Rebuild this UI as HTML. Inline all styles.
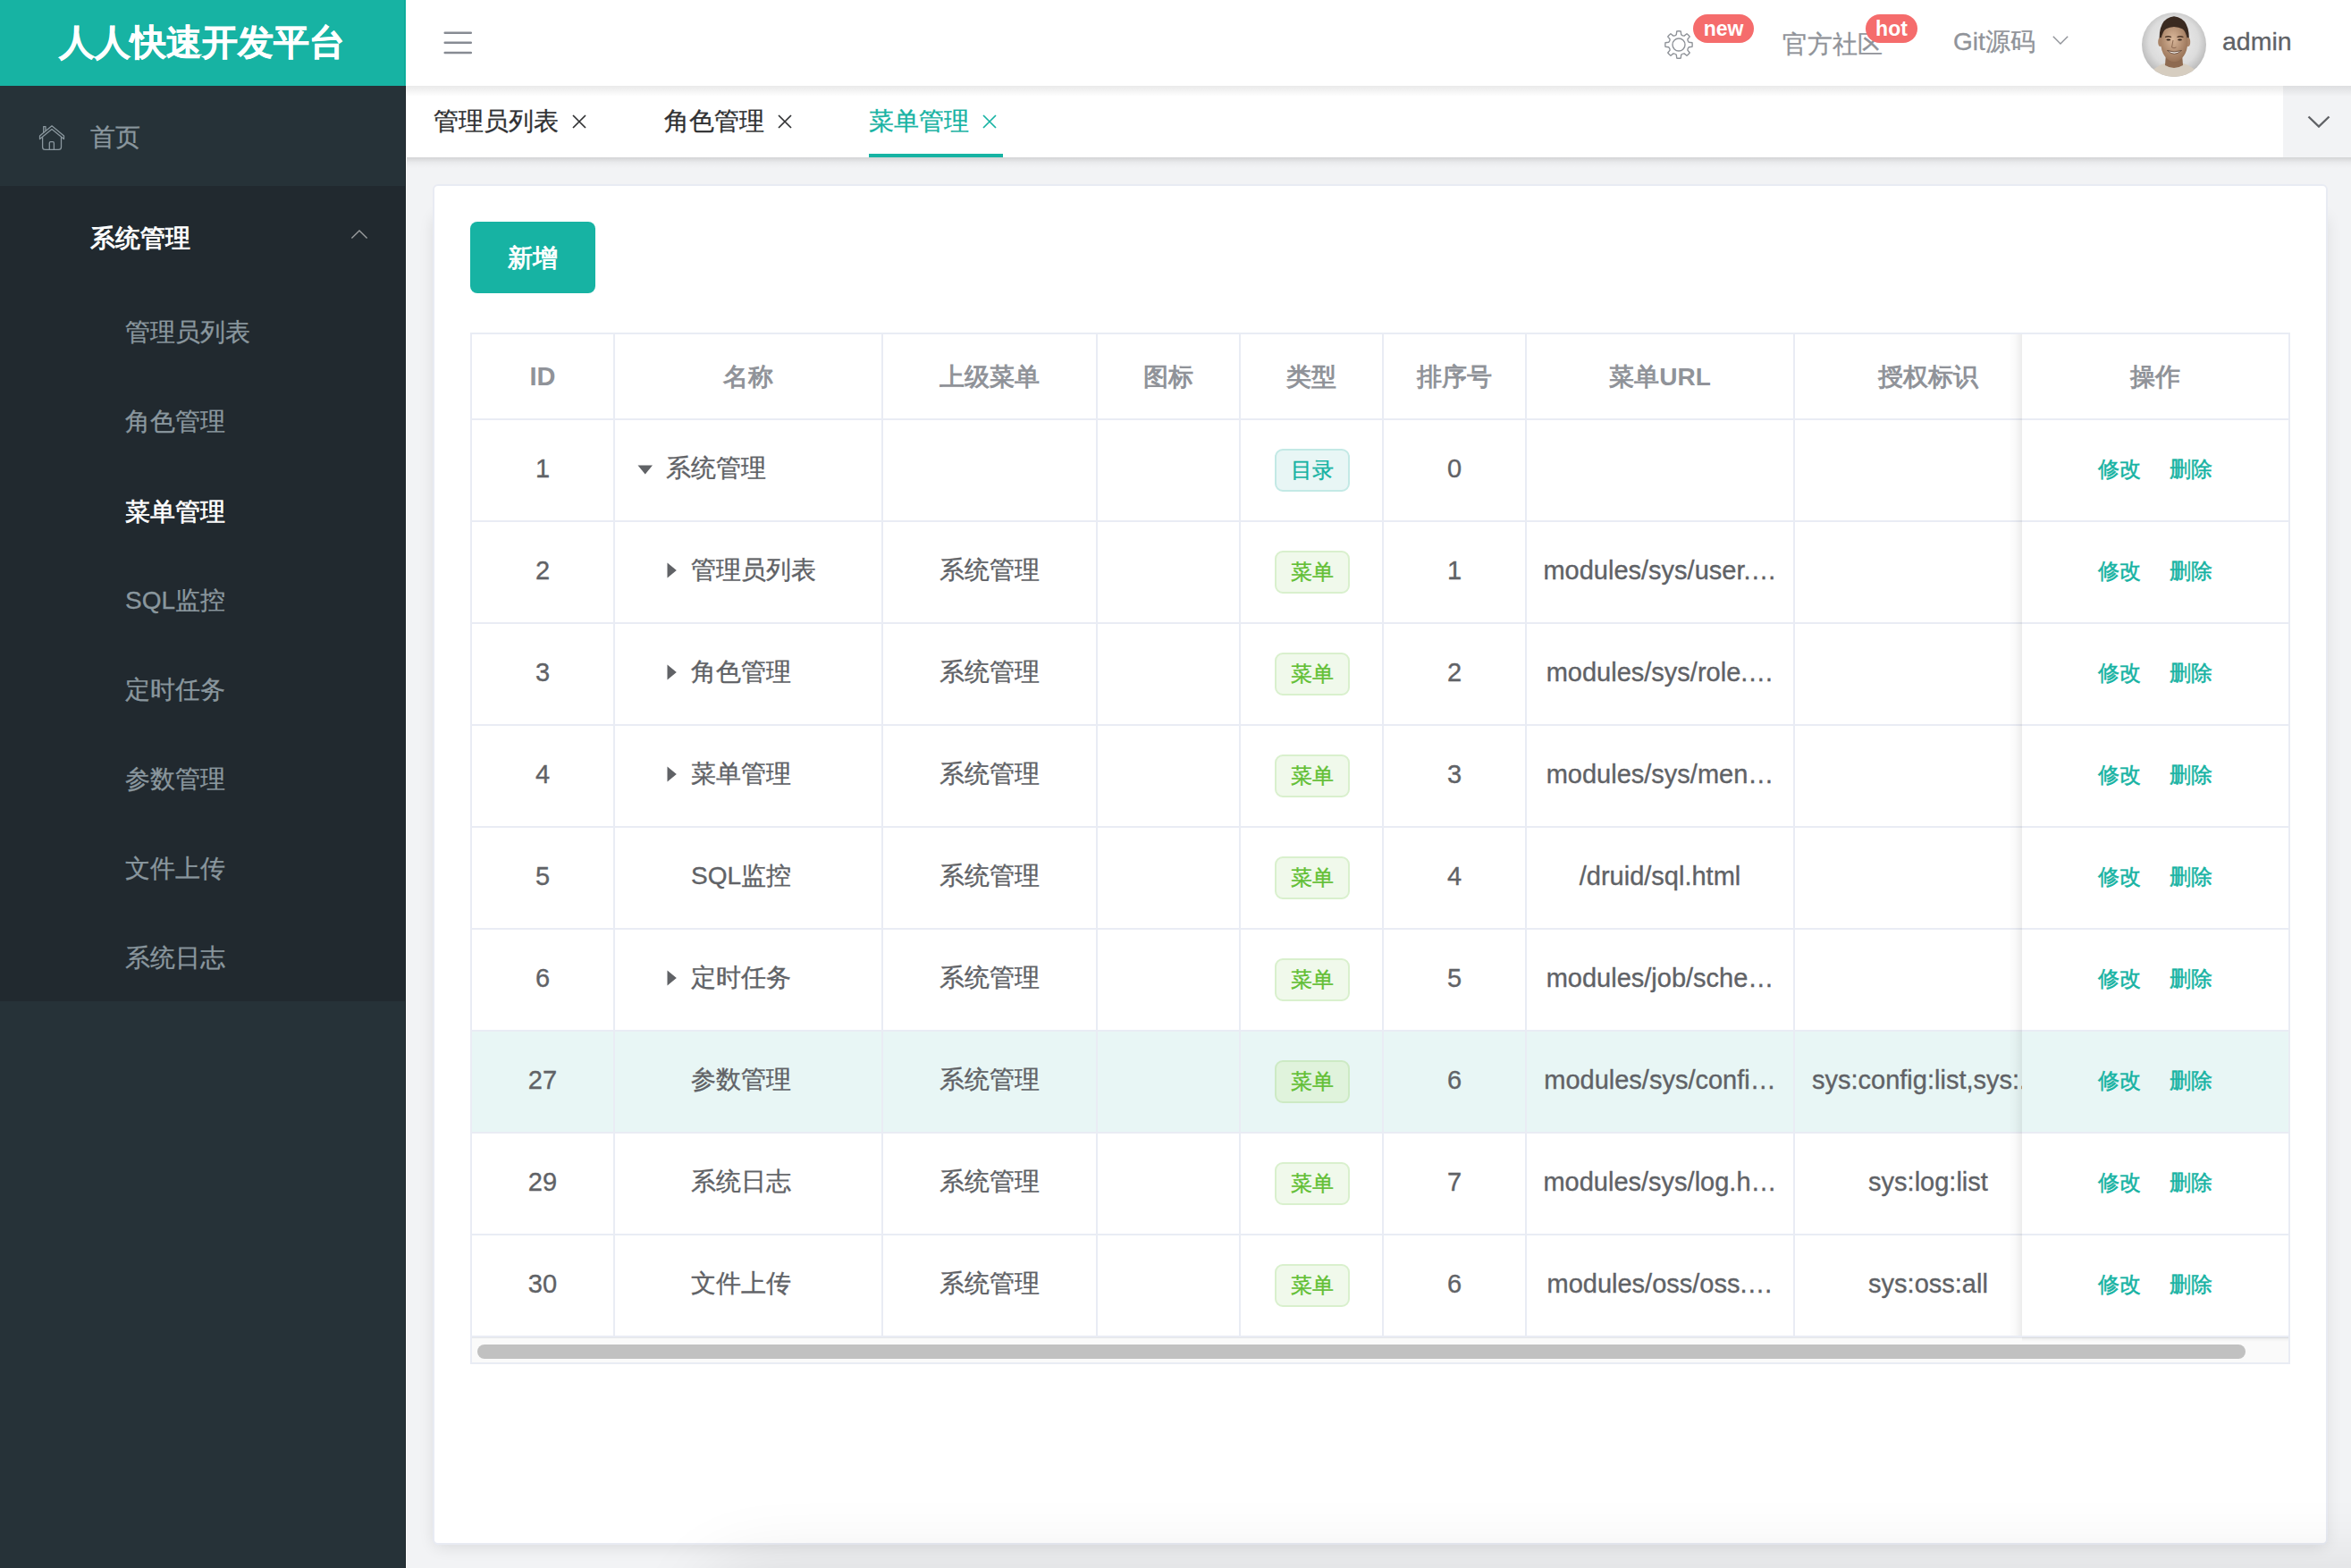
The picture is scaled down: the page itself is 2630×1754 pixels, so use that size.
<!DOCTYPE html>
<html><head><meta charset="utf-8">
<style>
*{box-sizing:border-box;margin:0;padding:0}
html,body{width:2630px;height:1754px;overflow:hidden;background:#f2f3f5;font-family:"Liberation Sans",sans-serif;}
.abs{position:absolute;white-space:nowrap}
.t{position:absolute;white-space:nowrap;line-height:1}
/* sidebar */
#sb{position:absolute;left:0;top:0;width:454px;height:1754px;background:#263238}
#logo{position:absolute;left:0;top:0;width:454px;height:96px;background:#17b3a3}
#sub{position:absolute;left:0;top:208px;width:454px;height:912px;background:#21292f}
.sbi{color:#8a979e;font-size:28px;-webkit-text-stroke:0.3px currentColor}
/* navbar */
#nav{position:absolute;left:454px;top:0;width:2176px;height:96px;background:#fff;z-index:3}
.gray{color:#909399;font-size:28px;-webkit-text-stroke:0.3px currentColor}
.badge{position:absolute;height:32px;border-radius:16px;background:#f56c6c;color:#fff;font-weight:bold;font-size:23px;text-align:center;line-height:32px}
/* tabs */
#tabs{position:absolute;left:454px;top:96px;width:2176px;height:80px;background:#fff;z-index:2}
.tab{font-size:28px;color:#303133;-webkit-text-stroke:0.3px currentColor}
/* card */
#card{position:absolute;left:484px;top:206px;width:2120px;height:1522px;background:#fff;border:2px solid #e8ebf3;border-radius:6px}
#btn{position:absolute;left:526px;top:248px;width:140px;height:80px;background:#17b3a3;border-radius:8px}
.hl{position:absolute;background:#e9ecf4}
.cell{position:absolute;font-size:28px;color:#606266;white-space:nowrap;line-height:1;-webkit-text-stroke:0.35px currentColor}
.hd{font-weight:bold;color:#909399;-webkit-text-stroke:0}
.lat{font-size:29px}
.tag{position:absolute;width:84px;height:48px;border-radius:9px;font-size:24px;line-height:43px;text-align:center;-webkit-text-stroke:0.35px currentColor}
.tg{background:#f0f9eb;border:2px solid #d9f0cd;color:#62bf35}
.tt{background:#e8f6f5;border:2px solid #c3e9e5;color:#17b3a3}
.op{position:absolute;font-size:24px;color:#17b3a3;line-height:1;-webkit-text-stroke:0.5px currentColor}
</style></head>
<body>
<div id="sb">
  <div id="logo"><span class="t" style="left:66px;top:27px;font-size:40px;font-weight:bold;color:#fff;-webkit-text-stroke:0.4px #fff">人人快速开发平台</span></div>
  <svg class="abs" style="left:38px;top:134px" width="40" height="40" viewBox="0 0 40 40" fill="none" stroke="#8a979e" stroke-width="1.3" stroke-linejoin="round">
    <path d="M6.5 21.5 V18 L20 6.8 L33.5 18 V21.5 L20 10.6 Z"/>
    <path d="M9.6 19.2 V30.4 Q9.6 33.3 12.5 33.3 H27.5 Q30.5 33.3 30.5 30.4 V19.2"/>
    <path d="M17.3 33.3 V25.9 Q17.3 24.6 18.6 24.6 H21.1 Q22.4 24.6 22.4 25.9 V33.3"/>
    <path d="M10.7 14.4 V7.6 H13 V12.5"/>
  </svg>
  <span class="t sbi" style="left:101px;top:140px">首页</span>
  <div id="sub">
    <span class="t" style="left:101px;top:45px;font-size:28px;color:#fff;-webkit-text-stroke:0.9px #fff">系统管理</span>
    <svg class="abs" style="left:392px;top:40px" width="20" height="22" viewBox="0 0 20 22" fill="none" stroke="#9a9d9f" stroke-width="1.4"><path d="M1.4 18.4 L10 10 L18.6 18.4"/></svg>
    <span class="t sbi" style="left:140px;top:150px">管理员列表</span>
    <span class="t sbi" style="left:140px;top:250px">角色管理</span>
    <span class="t sbi" style="left:140px;top:351px;color:#fff;-webkit-text-stroke:0.6px #fff">菜单管理</span>
    <span class="t sbi" style="left:140px;top:450px">SQL监控</span>
    <span class="t sbi" style="left:140px;top:550px">定时任务</span>
    <span class="t sbi" style="left:140px;top:650px">参数管理</span>
    <span class="t sbi" style="left:140px;top:750px">文件上传</span>
    <span class="t sbi" style="left:140px;top:850px">系统日志</span>
  </div>
</div>

<div id="nav">
  <svg class="abs" style="left:40px;top:30px" width="36" height="36" viewBox="0 0 36 36" stroke="#878b93" stroke-width="2.5" stroke-linecap="round"><path d="M3.7 6.8 H32.8 M3.7 17.8 H32.8 M3.7 28.9 H32.8"/></svg>
</div>
<!-- navbar right (absolute page coords) -->
<div style="position:absolute;left:0;top:0;z-index:4">
  <svg class="abs" style="left:1858px;top:30px" width="40" height="40" viewBox="0 0 40 40" fill="none" stroke="#8f9399" stroke-width="1.4" stroke-linejoin="round">
    <path d="M17.29 8.72 L17.75 4.97 A15.2 15.2 0 0 1 22.25 4.97 L22.71 8.72 A4.6 4.6 0 0 0 26.06 10.11 L29.04 7.78 A15.2 15.2 0 0 1 32.22 10.96 L29.89 13.94 A4.6 4.6 0 0 0 31.28 17.29 L35.03 17.75 A15.2 15.2 0 0 1 35.03 22.25 L31.28 22.71 A4.6 4.6 0 0 0 29.89 26.06 L32.22 29.04 A15.2 15.2 0 0 1 29.04 32.22 L26.06 29.89 A4.6 4.6 0 0 0 22.71 31.28 L22.25 35.03 A15.2 15.2 0 0 1 17.75 35.03 L17.29 31.28 A4.6 4.6 0 0 0 13.94 29.89 L10.96 32.22 A15.2 15.2 0 0 1 7.78 29.04 L10.11 26.06 A4.6 4.6 0 0 0 8.72 22.71 L4.97 22.25 A15.2 15.2 0 0 1 4.97 17.75 L8.72 17.29 A4.6 4.6 0 0 0 10.11 13.94 L7.78 10.96 A15.2 15.2 0 0 1 10.96 7.78 L13.94 10.11 A4.6 4.6 0 0 0 17.29 8.72Z"/>
    <circle cx="20" cy="20" r="7"/>
  </svg>
  <div class="badge" style="left:1894px;top:16px;width:68px">new</div>
  <span class="t gray" style="left:1994px;top:36px">官方社区</span>
  <div class="badge" style="left:2087px;top:16px;width:58px">hot</div>
  <span class="t gray" style="left:2185px;top:33px">Git源码</span>
  <svg class="abs" style="left:2296px;top:40px" width="18" height="10" viewBox="0 0 18 10" fill="none" stroke="#909399" stroke-width="1.4"><path d="M0.8 0.8 L9 9 L17.2 0.8"/></svg>
  <svg class="abs" style="left:2396px;top:14px" width="72" height="72" viewBox="0 0 72 72">
    <defs><radialGradient id="bgav" cx="50%" cy="45%" r="55%"><stop offset="0" stop-color="#f0f0f0"/><stop offset="0.7" stop-color="#dcdcdc"/><stop offset="1" stop-color="#b8b8b8"/></radialGradient>
    <radialGradient id="skin" cx="45%" cy="40%" r="60%"><stop offset="0" stop-color="#d9b79a"/><stop offset="1" stop-color="#9a7458"/></radialGradient>
    <clipPath id="cl"><circle cx="36" cy="36" r="36"/></clipPath></defs>
    <g clip-path="url(#cl)">
      <rect width="72" height="72" fill="url(#bgav)"/>
      <path d="M8 72 Q12 61 25 57 L47 57 Q60 61 64 72 Z" fill="#d6cdc0"/>
      <path d="M27 46 L45 46 L46 59 Q36 65 26 59 Z" fill="#8e6a50"/>
      <path d="M19.8 36 Q17.5 6 36 4.2 Q55 6 52.6 36 Z" fill="#3a2a20"/>
      <ellipse cx="20.8" cy="33" rx="2.6" ry="5" fill="#a98468"/>
      <ellipse cx="51.6" cy="33" rx="2.6" ry="5" fill="#a98468"/>
      <ellipse cx="36.2" cy="34" rx="15" ry="21" fill="url(#skin)"/>
      
      <path d="M21.5 24 Q23 12.5 36 11.8 Q49 12.5 51 24 Q47 16.5 36 16 Q25.5 16.5 21.5 24 Z" fill="#3a2a20"/>
      <path d="M26 27.5 Q29.5 26 33 27.5 M39.5 27.5 Q43 26 46.5 27.5" stroke="#4a3426" stroke-width="1.3" fill="none"/>
      <ellipse cx="29.8" cy="30.5" rx="2.4" ry="1.1" fill="#3a2a20"/>
      <ellipse cx="42.5" cy="30.5" rx="2.4" ry="1.1" fill="#3a2a20"/>
      <path d="M35 31 L33.5 39 Q36 40.5 38.5 39" stroke="#8c6a52" stroke-width="1" fill="none"/>
      <path d="M28.5 42.5 Q36 50 44.5 42.5 Q36 45.5 28.5 42.5 Z" fill="#f4efe8" stroke="#5a3e2e" stroke-width="0.8"/>
    </g>
  </svg>
  <span class="t" style="left:2486px;top:32px;font-size:28.5px;color:#606266;-webkit-text-stroke:0.3px #606266">admin</span>
</div>

<div id="tabs">
  <div class="abs" style="left:2100px;top:0;width:76px;height:80px;background:#f2f3f5"></div>
  <svg class="abs" style="left:2127px;top:33px" width="26" height="14" viewBox="0 0 26 14" fill="none" stroke="#606266" stroke-width="2.4"><path d="M1.5 1.5 L13 12.5 L24.5 1.5"/></svg>
  <span class="t tab" style="left:31px;top:26px">管理员列表</span>
  <svg class="abs" style="left:186px;top:32px" width="16" height="16" viewBox="0 0 16 16" stroke="#303133" stroke-width="1.7"><path d="M1 1 L15 15 M15 1 L1 15"/></svg>
  <span class="t tab" style="left:289px;top:26px">角色管理</span>
  <svg class="abs" style="left:416px;top:32px" width="16" height="16" viewBox="0 0 16 16" stroke="#303133" stroke-width="1.7"><path d="M1 1 L15 15 M15 1 L1 15"/></svg>
  <span class="t tab" style="left:518px;top:26px;color:#17b3a3">菜单管理</span>
  <svg class="abs" style="left:645px;top:32px" width="16" height="16" viewBox="0 0 16 16" stroke="#17b3a3" stroke-width="1.7"><path d="M1 1 L15 15 M15 1 L1 15"/></svg>
  <div class="abs" style="left:518px;top:76px;width:150px;height:4px;background:#17b3a3"></div>
</div>

<div class="abs" style="left:454px;top:96px;width:2176px;height:12px;background:linear-gradient(rgba(0,0,0,.085),rgba(0,0,0,0));z-index:3"></div>
<div class="abs" style="left:454px;top:176px;width:2176px;height:12px;background:linear-gradient(rgba(0,0,0,.13),rgba(0,0,0,.03) 50%,rgba(0,0,0,0));z-index:3"></div>
<div class="abs" style="left:452px;top:0;width:1px;height:96px;background:#0ea897;z-index:5"></div>
<div class="abs" style="left:453px;top:96px;width:1px;height:1658px;background:#1a2328;z-index:5"></div>
<div class="abs" style="left:454px;top:176px;width:1px;height:1578px;background:#fff;z-index:5"></div>
<div class="abs" style="left:486px;top:240px;width:2116px;height:1488px;border-radius:6px;box-shadow:0 2px 18px rgba(0,0,0,.11)"></div>
<div id="card"></div>
<div id="btn"><span class="t" style="left:42px;top:27px;font-size:28px;color:#fff;-webkit-text-stroke:0.9px #fff">新增</span></div>

<div class="hl" style="left:528px;top:1154px;width:2032px;height:112px;background:#e8f6f5"></div>
<div class="hl" style="left:526px;top:372px;width:2036px;height:2px;background:#e9ecf4"></div>
<div class="hl" style="left:526px;top:372px;width:2px;height:1154px;background:#e9ecf4"></div>
<div class="hl" style="left:526px;top:468px;width:2034px;height:2px;background:#e9ecf4"></div>
<div class="hl" style="left:526px;top:582px;width:2034px;height:2px;background:#e9ecf4"></div>
<div class="hl" style="left:526px;top:696px;width:2034px;height:2px;background:#e9ecf4"></div>
<div class="hl" style="left:526px;top:810px;width:2034px;height:2px;background:#e9ecf4"></div>
<div class="hl" style="left:526px;top:924px;width:2034px;height:2px;background:#e9ecf4"></div>
<div class="hl" style="left:526px;top:1038px;width:2034px;height:2px;background:#e9ecf4"></div>
<div class="hl" style="left:526px;top:1152px;width:2034px;height:2px;background:#e9ecf4"></div>
<div class="hl" style="left:526px;top:1266px;width:2034px;height:2px;background:#e9ecf4"></div>
<div class="hl" style="left:526px;top:1380px;width:2034px;height:2px;background:#e9ecf4"></div>
<div class="hl" style="left:526px;top:1494px;width:2034px;height:2px;background:#e9ecf4"></div>
<div class="hl" style="left:686px;top:372px;width:2px;height:1124px;background:#e9ecf4"></div>
<div class="hl" style="left:986px;top:372px;width:2px;height:1124px;background:#e9ecf4"></div>
<div class="hl" style="left:1226px;top:372px;width:2px;height:1124px;background:#e9ecf4"></div>
<div class="hl" style="left:1386px;top:372px;width:2px;height:1124px;background:#e9ecf4"></div>
<div class="hl" style="left:1546px;top:372px;width:2px;height:1124px;background:#e9ecf4"></div>
<div class="hl" style="left:1706px;top:372px;width:2px;height:1124px;background:#e9ecf4"></div>
<div class="hl" style="left:2006px;top:372px;width:2px;height:1124px;background:#e9ecf4"></div>
<div class="hl" style="left:2306px;top:372px;width:2px;height:1124px;background:#e9ecf4"></div>
<div class="hl" style="left:528px;top:1496px;width:2032px;height:28px;background:#fafafa"></div>
<div class="hl" style="left:526px;top:1524px;width:2036px;height:2px;background:#e9ecf4"></div>
<div class="hl" style="left:2560px;top:372px;width:2px;height:1154px;background:#e9ecf4"></div>
<div class="hl" style="left:528px;top:1496px;width:2032px;height:1px;background:#e6e8ea"></div>
<div class="hl" style="left:534px;top:1504px;width:1978px;height:16px;border-radius:8px;background:#c1c1c1"></div>
<div class="cell hd lat" style="left:528px;top:407px;width:158px;text-align:center;">ID</div>
<div class="cell hd" style="left:688px;top:408px;width:298px;text-align:center;">名称</div>
<div class="cell hd" style="left:988px;top:408px;width:238px;text-align:center;">上级菜单</div>
<div class="cell hd" style="left:1228px;top:408px;width:158px;text-align:center;">图标</div>
<div class="cell hd" style="left:1388px;top:408px;width:158px;text-align:center;">类型</div>
<div class="cell hd" style="left:1548px;top:408px;width:158px;text-align:center;">排序号</div>
<div class="cell hd" style="left:1708px;top:408px;width:298px;text-align:center;">菜单URL</div>
<div class="cell hd" style="left:2008px;top:408px;width:298px;text-align:center;">授权标识</div>
<div class="cell lat" style="left:528px;top:510px;width:158px;text-align:center;">1</div>
<svg class="abs" style="left:713px;top:520px" width="18" height="11" viewBox="0 0 18 11"><path d="M0.5 0.5 H17 L8.75 10.5 Z" fill="#606266"/></svg>
<div class="cell" style="left:745px;top:510px;">系统管理</div>
<div class="tag tt" style="left:1426px;top:502px">目录</div>
<div class="cell lat" style="left:1548px;top:510px;width:158px;text-align:center;">0</div>
<div class="cell lat" style="left:528px;top:624px;width:158px;text-align:center;">2</div>
<svg class="abs" style="left:746px;top:629px" width="11" height="18" viewBox="0 0 11 18"><path d="M0.5 0.5 V17.5 L10.8 9 Z" fill="#606266"/></svg>
<div class="cell" style="left:773px;top:624px;">管理员列表</div>
<div class="cell" style="left:988px;top:624px;width:238px;text-align:center;">系统管理</div>
<div class="tag tg" style="left:1426px;top:616px">菜单</div>
<div class="cell lat" style="left:1548px;top:624px;width:158px;text-align:center;">1</div>
<div class="cell lat" style="left:1708px;top:624px;width:298px;text-align:center;">modules/sys/user.…</div>
<div class="cell lat" style="left:528px;top:738px;width:158px;text-align:center;">3</div>
<svg class="abs" style="left:746px;top:743px" width="11" height="18" viewBox="0 0 11 18"><path d="M0.5 0.5 V17.5 L10.8 9 Z" fill="#606266"/></svg>
<div class="cell" style="left:773px;top:738px;">角色管理</div>
<div class="cell" style="left:988px;top:738px;width:238px;text-align:center;">系统管理</div>
<div class="tag tg" style="left:1426px;top:730px">菜单</div>
<div class="cell lat" style="left:1548px;top:738px;width:158px;text-align:center;">2</div>
<div class="cell lat" style="left:1708px;top:738px;width:298px;text-align:center;">modules/sys/role.…</div>
<div class="cell lat" style="left:528px;top:852px;width:158px;text-align:center;">4</div>
<svg class="abs" style="left:746px;top:857px" width="11" height="18" viewBox="0 0 11 18"><path d="M0.5 0.5 V17.5 L10.8 9 Z" fill="#606266"/></svg>
<div class="cell" style="left:773px;top:852px;">菜单管理</div>
<div class="cell" style="left:988px;top:852px;width:238px;text-align:center;">系统管理</div>
<div class="tag tg" style="left:1426px;top:844px">菜单</div>
<div class="cell lat" style="left:1548px;top:852px;width:158px;text-align:center;">3</div>
<div class="cell lat" style="left:1708px;top:852px;width:298px;text-align:center;">modules/sys/men…</div>
<div class="cell lat" style="left:528px;top:966px;width:158px;text-align:center;">5</div>
<div class="cell" style="left:773px;top:966px;">SQL监控</div>
<div class="cell" style="left:988px;top:966px;width:238px;text-align:center;">系统管理</div>
<div class="tag tg" style="left:1426px;top:958px">菜单</div>
<div class="cell lat" style="left:1548px;top:966px;width:158px;text-align:center;">4</div>
<div class="cell lat" style="left:1708px;top:966px;width:298px;text-align:center;">/druid/sql.html</div>
<div class="cell lat" style="left:528px;top:1080px;width:158px;text-align:center;">6</div>
<svg class="abs" style="left:746px;top:1085px" width="11" height="18" viewBox="0 0 11 18"><path d="M0.5 0.5 V17.5 L10.8 9 Z" fill="#606266"/></svg>
<div class="cell" style="left:773px;top:1080px;">定时任务</div>
<div class="cell" style="left:988px;top:1080px;width:238px;text-align:center;">系统管理</div>
<div class="tag tg" style="left:1426px;top:1072px">菜单</div>
<div class="cell lat" style="left:1548px;top:1080px;width:158px;text-align:center;">5</div>
<div class="cell lat" style="left:1708px;top:1080px;width:298px;text-align:center;">modules/job/sche…</div>
<div class="cell lat" style="left:528px;top:1194px;width:158px;text-align:center;">27</div>
<div class="cell" style="left:773px;top:1194px;">参数管理</div>
<div class="cell" style="left:988px;top:1194px;width:238px;text-align:center;">系统管理</div>
<div class="tag tg" style="left:1426px;top:1186px;background:#e0f3dc;border-color:#cdeac4">菜单</div>
<div class="cell lat" style="left:1548px;top:1194px;width:158px;text-align:center;">6</div>
<div class="cell lat" style="left:1708px;top:1194px;width:298px;text-align:center;">modules/sys/confi…</div>
<div class="cell lat" style="left:2027px;top:1194px;">sys:config:list,sys:.…</div>
<div class="cell lat" style="left:528px;top:1308px;width:158px;text-align:center;">29</div>
<div class="cell" style="left:773px;top:1308px;">系统日志</div>
<div class="cell" style="left:988px;top:1308px;width:238px;text-align:center;">系统管理</div>
<div class="tag tg" style="left:1426px;top:1300px">菜单</div>
<div class="cell lat" style="left:1548px;top:1308px;width:158px;text-align:center;">7</div>
<div class="cell lat" style="left:1708px;top:1308px;width:298px;text-align:center;">modules/sys/log.h…</div>
<div class="cell lat" style="left:2008px;top:1308px;width:298px;text-align:center;">sys:log:list</div>
<div class="cell lat" style="left:528px;top:1422px;width:158px;text-align:center;">30</div>
<div class="cell" style="left:773px;top:1422px;">文件上传</div>
<div class="cell" style="left:988px;top:1422px;width:238px;text-align:center;">系统管理</div>
<div class="tag tg" style="left:1426px;top:1414px">菜单</div>
<div class="cell lat" style="left:1548px;top:1422px;width:158px;text-align:center;">6</div>
<div class="cell lat" style="left:1708px;top:1422px;width:298px;text-align:center;">modules/oss/oss.…</div>
<div class="cell lat" style="left:2008px;top:1422px;width:298px;text-align:center;">sys:oss:all</div>
<div class="hl" style="left:2262px;top:374px;width:298px;height:1120px;background:#fff;z-index:5"></div>
<div class="hl" style="left:2247px;top:374px;width:15px;height:1120px;background:linear-gradient(90deg,rgba(0,0,0,0),rgba(0,0,0,.025) 50%,rgba(0,0,0,.075));z-index:5"></div>
<div class="hl" style="left:2262px;top:1496px;width:298px;height:5px;background:linear-gradient(rgba(0,0,0,.06),rgba(0,0,0,0));z-index:5"></div>
<div class="hl" style="left:2262px;top:1154px;width:298px;height:112px;background:#e8f6f5;z-index:5"></div>
<div class="hl" style="left:2262px;top:468px;width:298px;height:2px;background:#e9ecf4;z-index:6"></div>
<div class="hl" style="left:2262px;top:582px;width:298px;height:2px;background:#e9ecf4;z-index:6"></div>
<div class="hl" style="left:2262px;top:696px;width:298px;height:2px;background:#e9ecf4;z-index:6"></div>
<div class="hl" style="left:2262px;top:810px;width:298px;height:2px;background:#e9ecf4;z-index:6"></div>
<div class="hl" style="left:2262px;top:924px;width:298px;height:2px;background:#e9ecf4;z-index:6"></div>
<div class="hl" style="left:2262px;top:1038px;width:298px;height:2px;background:#e9ecf4;z-index:6"></div>
<div class="hl" style="left:2262px;top:1152px;width:298px;height:2px;background:#e9ecf4;z-index:6"></div>
<div class="hl" style="left:2262px;top:1266px;width:298px;height:2px;background:#e9ecf4;z-index:6"></div>
<div class="hl" style="left:2262px;top:1380px;width:298px;height:2px;background:#e9ecf4;z-index:6"></div>
<div class="hl" style="left:2262px;top:1494px;width:298px;height:2px;background:#e9ecf4;z-index:6"></div>
<div class="cell hd" style="left:2262px;top:408px;width:298px;text-align:center;z-index:6">操作</div>
<div class="op" style="left:2346.5px;top:513px;z-index:6">修改</div>
<div class="op" style="left:2426.5px;top:513px;z-index:6">删除</div>
<div class="op" style="left:2346.5px;top:627px;z-index:6">修改</div>
<div class="op" style="left:2426.5px;top:627px;z-index:6">删除</div>
<div class="op" style="left:2346.5px;top:741px;z-index:6">修改</div>
<div class="op" style="left:2426.5px;top:741px;z-index:6">删除</div>
<div class="op" style="left:2346.5px;top:855px;z-index:6">修改</div>
<div class="op" style="left:2426.5px;top:855px;z-index:6">删除</div>
<div class="op" style="left:2346.5px;top:969px;z-index:6">修改</div>
<div class="op" style="left:2426.5px;top:969px;z-index:6">删除</div>
<div class="op" style="left:2346.5px;top:1083px;z-index:6">修改</div>
<div class="op" style="left:2426.5px;top:1083px;z-index:6">删除</div>
<div class="op" style="left:2346.5px;top:1197px;z-index:6">修改</div>
<div class="op" style="left:2426.5px;top:1197px;z-index:6">删除</div>
<div class="op" style="left:2346.5px;top:1311px;z-index:6">修改</div>
<div class="op" style="left:2426.5px;top:1311px;z-index:6">删除</div>
<div class="op" style="left:2346.5px;top:1425px;z-index:6">修改</div>
<div class="op" style="left:2426.5px;top:1425px;z-index:6">删除</div>
<div id="btmshadow" style="position:absolute;left:800px;top:1770px;width:1950px;height:100px;border-radius:60px;box-shadow:0 0 80px 20px rgba(0,0,0,.10);z-index:10"></div>
</body></html>
